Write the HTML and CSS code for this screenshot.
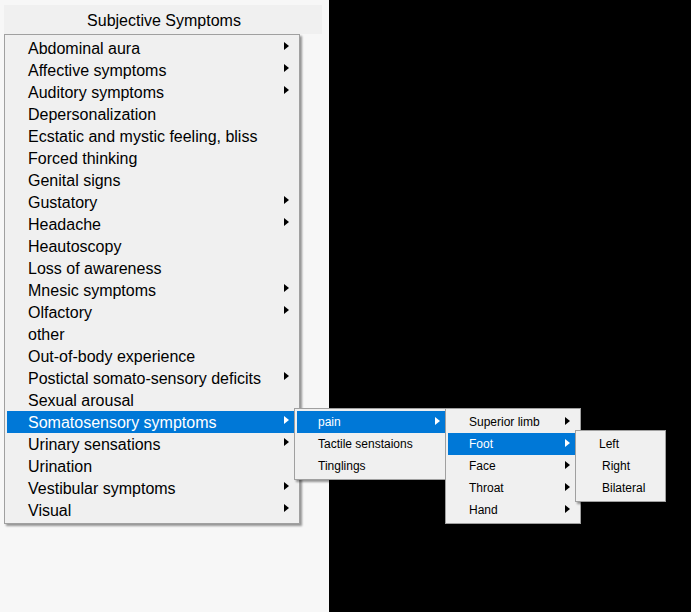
FILE: index.html
```html
<!DOCTYPE html>
<html>
<head>
<meta charset="utf-8">
<link rel="stylesheet" href="styles.css">
</head>
<body>
<div class="panel">
  <div class="title">Subjective Symptoms</div>
  <div class="menu main">
    <div class="item sub"><span>Abdominal aura</span></div>
    <div class="item sub"><span>Affective symptoms</span></div>
    <div class="item sub"><span>Auditory symptoms</span></div>
    <div class="item"><span>Depersonalization</span></div>
    <div class="item"><span>Ecstatic and mystic feeling, bliss</span></div>
    <div class="item"><span>Forced thinking</span></div>
    <div class="item"><span>Genital signs</span></div>
    <div class="item sub"><span>Gustatory</span></div>
    <div class="item sub"><span>Headache</span></div>
    <div class="item"><span>Heautoscopy</span></div>
    <div class="item"><span>Loss of awareness</span></div>
    <div class="item sub"><span>Mnesic symptoms</span></div>
    <div class="item sub"><span>Olfactory</span></div>
    <div class="item"><span>other</span></div>
    <div class="item"><span>Out-of-body experience</span></div>
    <div class="item sub"><span>Postictal somato-sensory deficits</span></div>
    <div class="item"><span>Sexual arousal</span></div>
    <div class="item sub active"><span>Somatosensory symptoms</span>
      <div class="menu small level1">
        <div class="item sub active"><span>pain</span>
          <div class="menu small level2">
            <div class="item sub"><span>Superior limb</span></div>
            <div class="item sub active"><span>Foot</span>
              <div class="menu small level3">
                <div class="item"><span>Left</span></div>
                <div class="item indent"><span>Right</span></div>
                <div class="item indent"><span>Bilateral</span></div>
              </div>
            </div>
            <div class="item sub"><span>Face</span></div>
            <div class="item sub"><span>Throat</span></div>
            <div class="item sub"><span>Hand</span></div>
          </div>
        </div>
        <div class="item"><span>Tactile senstaions</span></div>
        <div class="item"><span>Tinglings</span></div>
      </div>
    </div>
    <div class="item sub"><span>Urinary sensations</span></div>
    <div class="item"><span>Urination</span></div>
    <div class="item sub"><span>Vestibular symptoms</span></div>
    <div class="item sub"><span>Visual</span></div>
  </div>
</div>
</body>
</html>
```

FILE: styles.css
```css
html, body {
  margin: 0;
  padding: 0;
}
body {
  background: #000;
  width: 691px;
  height: 612px;
  overflow: hidden;
  font-family: "Liberation Sans", Arial, sans-serif;
  color: #000;
}
.panel {
  width: 329px;
  height: 612px;
  box-sizing: border-box;
  background: #f7f7f7;
  padding: 5px 7px 0 4px;
}
.title {
  height: 29px;
  line-height: 29px;
  background: #f0f0f0;
  text-align: center;
  font-size: 16px;
  padding-top: 1px;
  padding-left: 2px;
  box-sizing: border-box;
}
.menu {
  background: #f0f0f0;
  border: 1px solid #a0a0a0;
  padding: 2px;
  box-sizing: border-box;
  box-shadow: 2px 2px 2px rgba(0, 0, 0, 0.4);
  color: #000;
}
.main {
  width: 296px;
  font-size: 16px;
}
.item {
  position: relative;
  display: flex;
  align-items: flex-start;
  height: 22px;
  line-height: 22px;
  padding-left: 21px;
  white-space: nowrap;
  color: #000;
}
.main > .item > span {
  line-height: 24px;
}
.main > .item {
  padding-right: 8px;
}
.item.sub::after {
  content: "";
  margin-left: auto;
  margin-top: 5px;
  width: 0;
  height: 0;
  border-left: 5px solid #000;
  border-top: 4px solid transparent;
  border-bottom: 4px solid transparent;
}
.item.active {
  background: #0078d7;
  color: #fff;
}
.item.sub.active::after {
  border-left-color: #fff;
}
.small {
  position: absolute;
  top: -3px;
  font-size: 12px;
  z-index: 2;
}
.small .item::after {
  margin-top: 6px;
}
.level1 {
  left: 287px;
  width: 155px;
}
.level1 > .item {
  padding-right: 6px;
}
.level2 {
  left: 148px;
  width: 136px;
}
.level2 > .item {
  padding-right: 8px;
}
.level3 {
  left: 127px;
  width: 91px;
}
.level3 > .item.indent {
  padding-left: 24px;
}
```
